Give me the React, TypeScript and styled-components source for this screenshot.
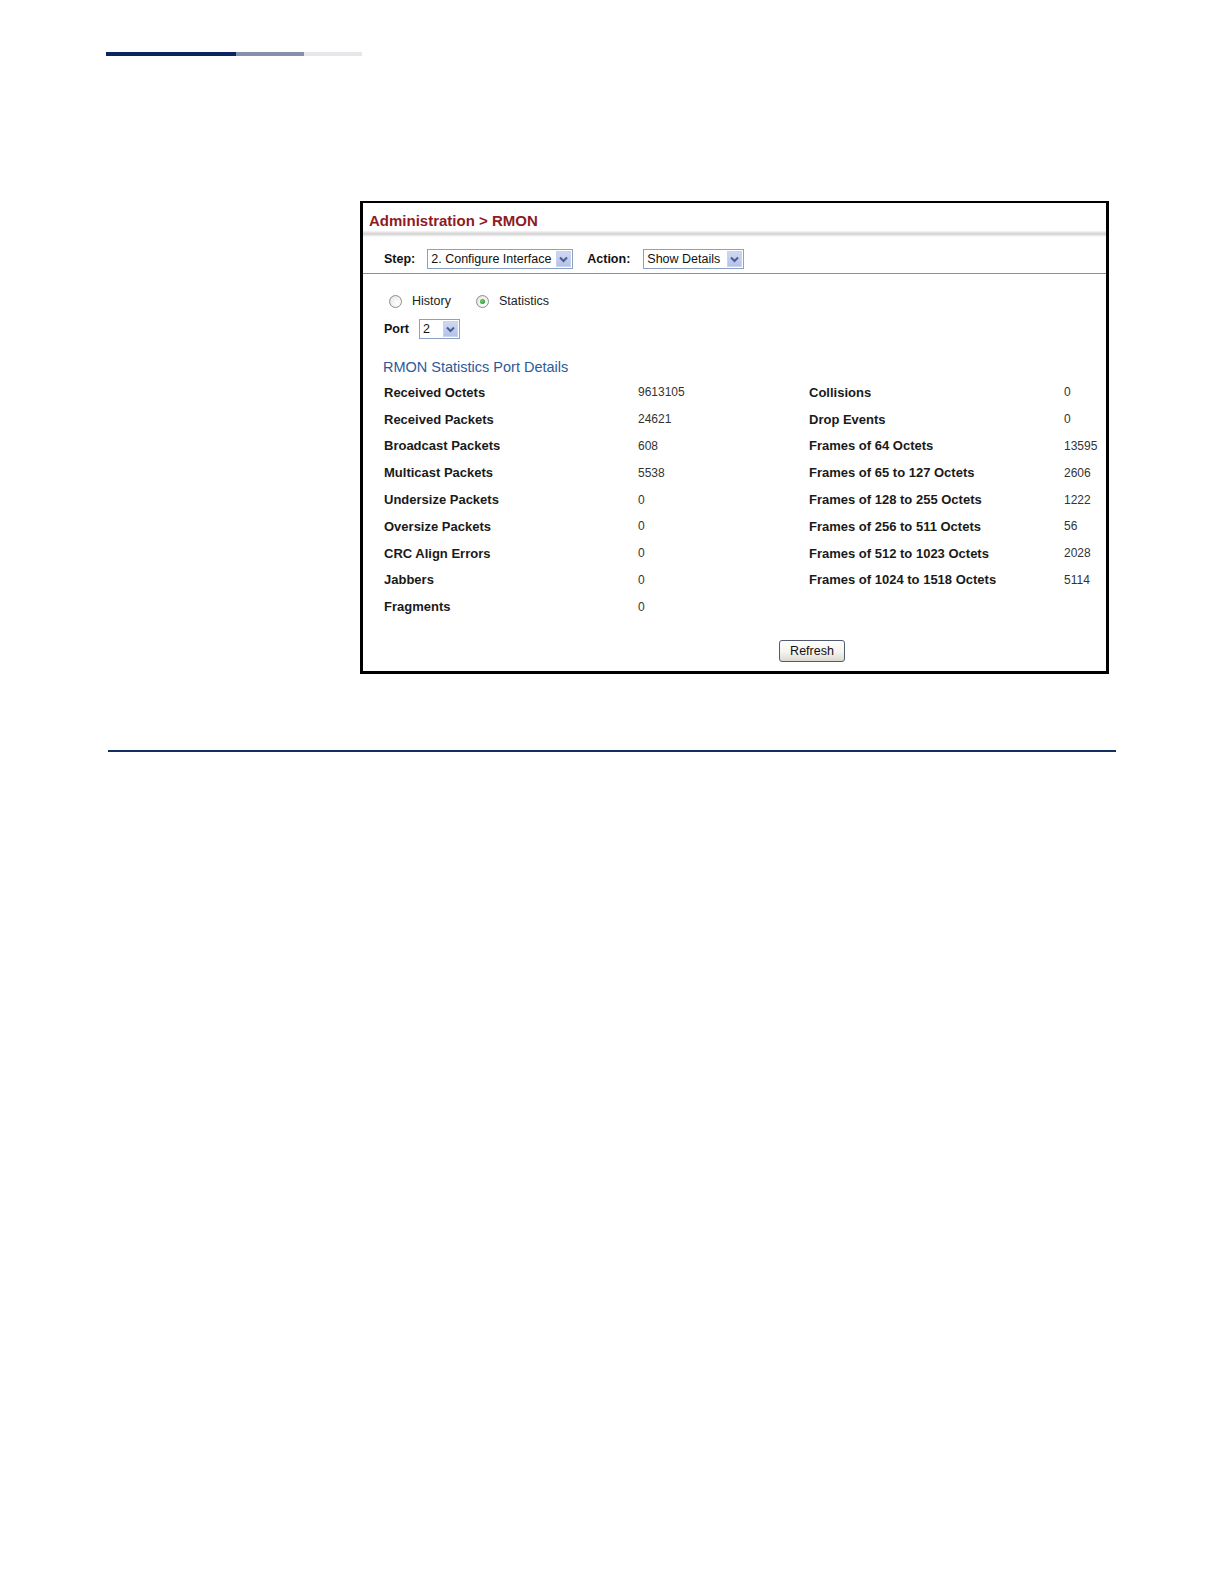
import styled, { createGlobalStyle } from "styled-components";

const GlobalStyle = createGlobalStyle`
  html, body {
    margin: 0;
    padding: 0;
    background: #ffffff;
  }
  body {
    font-family: "Liberation Sans", Arial, sans-serif;
    color: #111111;
  }
`

const Page = styled.div`
  width: 1224px;
  min-height: 1584px;
  padding-top: 52px;
  box-sizing: border-box;
`

const TopRule = styled.div`
  display: flex;
  margin-left: 106px;
  height: 4px;
`

const RuleSegment = styled.div<{ $width: number; $color: string }>`
  width: ${(p) => p.$width}px;
  height: 100%;
  background: ${(p) => p.$color};
`

const Panel = styled.div`
  margin: 145px 0 0 360px;
  width: 749px;
  box-sizing: border-box;
  border: 3px solid #000000;
  border-top-width: 2px;
  background: #ffffff;
`

const Title = styled.div`
  padding: 8px 0 0 6px;
  height: 20px;
  line-height: 20px;
  font-size: 15px;
  font-weight: 700;
  color: #8e1b1f;
`

const TitleShadow = styled.div`
  height: 6px;
  background: linear-gradient(to bottom, #f7f7f7 0%, #d2d2d2 45%, #e4e4e4 70%, #ffffff 100%);
`

const Toolbar = styled.div`
  display: flex;
  align-items: center;
  padding: 12px 0 4px 21px;
  border-bottom: 1px solid #8f8f8f;
`

const FieldLabel = styled.span<{ $gap?: number }>`
  font-size: 12.5px;
  font-weight: 700;
  color: #111111;
  margin-right: ${(p) => p.$gap ?? 12}px;
`

const SelectBox = styled.div<{ $width: number; $gap?: number }>`
  display: inline-flex;
  align-items: center;
  justify-content: space-between;
  box-sizing: border-box;
  width: ${(p) => p.$width}px;
  height: 20px;
  padding-left: 3px;
  margin-right: ${(p) => p.$gap ?? 0}px;
  border: 1px solid #8aa1c4;
  background: #ffffff;
  font-size: 12.5px;
  color: #111111;
  white-space: nowrap;
`

const SelectArrow = styled.span`
  display: inline-flex;
  align-items: center;
  justify-content: center;
  width: 15px;
  height: 16px;
  margin-right: 1px;
  box-sizing: border-box;
  border: 1px solid #c9d3ef;
  background: linear-gradient(to bottom, #cfd8f3 0%, #b5c2e8 100%);
`

const RadioRow = styled.div`
  display: flex;
  align-items: center;
  height: 16px;
  margin-top: 19px;
  padding-left: 26px;
`

const RadioOption = styled.label<{ $gap?: number }>`
  display: inline-flex;
  align-items: center;
  gap: 10px;
  margin-right: ${(p) => p.$gap ?? 0}px;
  font-size: 12.5px;
  color: #222222;
`

const RadioDot = styled.span<{ $checked: boolean }>`
  position: relative;
  width: 13px;
  height: 13px;
  box-sizing: border-box;
  border-radius: 50%;
  border: 1px solid #8e8e8e;
  background: radial-gradient(circle at 65% 65%, #ffffff 0%, #f1f1ee 50%, #d9d9d4 100%);

  &::after {
    content: "";
    display: ${(p) => (p.$checked ? "block" : "none")};
    position: absolute;
    left: 3px;
    top: 3px;
    width: 5px;
    height: 5px;
    border-radius: 50%;
    background: radial-gradient(circle at 40% 40%, #7ad27a 0%, #2f9a35 70%, #237a28 100%);
  }
`

const PortRow = styled.div`
  display: flex;
  align-items: center;
  height: 20px;
  margin-top: 10px;
  padding-left: 21px;
`

const SectionHeading = styled.div`
  margin-top: 19px;
  padding-left: 20px;
  height: 18px;
  line-height: 18px;
  font-size: 14.5px;
  color: #2c5a9a;
`

const StatsGrid = styled.div`
  display: grid;
  grid-template-columns: 254px 171px 255px 1fr;
  grid-auto-rows: 26.8px;
  align-items: center;
  margin-top: 3px;
  padding-left: 21px;
`

const StatLabel = styled.span`
  font-size: 13px;
  font-weight: 700;
  color: #1a1a1a;
  white-space: nowrap;
`

const StatValue = styled.span`
  font-size: 12px;
  color: #333333;
`

const ButtonRow = styled.div`
  margin-top: 20px;
  padding: 0 0 9px 416px;
`

const RefreshButton = styled.button`
  width: 66px;
  height: 22px;
  padding: 0;
  border: 1px solid #4f5b70;
  border-radius: 3px;
  background: linear-gradient(to bottom, #ffffff 0%, #f4f3ee 55%, #dcd9cf 100%);
  font-family: "Liberation Sans", Arial, sans-serif;
  font-size: 12.5px;
  color: #111111;
`

const BottomRule = styled.div`
  margin: 76px 0 0 108px;
  width: 1008px;
  height: 2px;
  background: #12305f;
`

function Chevron() {
  return (
    <SelectArrow>
      <svg width="9" height="7" viewBox="0 0 9 7">
        <path d="M1 1.5 L4.5 5 L8 1.5" fill="none" stroke="#4a5d8c" strokeWidth="2" />
      </svg>
    </SelectArrow>
  )
}

const stats: [string, string, string?, string?][] = [
  ["Received Octets", "9613105", "Collisions", "0"],
  ["Received Packets", "24621", "Drop Events", "0"],
  ["Broadcast Packets", "608", "Frames of 64 Octets", "13595"],
  ["Multicast Packets", "5538", "Frames of 65 to 127 Octets", "2606"],
  ["Undersize Packets", "0", "Frames of 128 to 255 Octets", "1222"],
  ["Oversize Packets", "0", "Frames of 256 to 511 Octets", "56"],
  ["CRC Align Errors", "0", "Frames of 512 to 1023 Octets", "2028"],
  ["Jabbers", "0", "Frames of 1024 to 1518 Octets", "5114"],
  ["Fragments", "0"],
]

export default function App() {
  return (
    <>
      <GlobalStyle />
      <Page>
        <TopRule>
          <RuleSegment $width={130} $color="#0b2462" />
          <RuleSegment $width={68} $color="#8591ab" />
          <RuleSegment $width={58} $color="#e6e7ea" />
        </TopRule>

        <Panel>
          <Title>Administration &gt; RMON</Title>
          <TitleShadow />

          <Toolbar>
            <FieldLabel>Step:</FieldLabel>
            <SelectBox $width={146} $gap={14}>
              2. Configure Interface
              <Chevron />
            </SelectBox>
            <FieldLabel $gap={13}>Action:</FieldLabel>
            <SelectBox $width={101}>
              Show Details
              <Chevron />
            </SelectBox>
          </Toolbar>

          <RadioRow>
            <RadioOption $gap={25}>
              <RadioDot $checked={false} />
              History
            </RadioOption>
            <RadioOption>
              <RadioDot $checked={true} />
              Statistics
            </RadioOption>
          </RadioRow>

          <PortRow>
            <FieldLabel $gap={10}>Port</FieldLabel>
            <SelectBox $width={41}>
              2
              <Chevron />
            </SelectBox>
          </PortRow>

          <SectionHeading>RMON Statistics Port Details</SectionHeading>

          <StatsGrid>
            {stats.map(([label, value, rLabel, rValue]) => [
              <StatLabel key={label + "-l"}>{label}</StatLabel>,
              <StatValue key={label + "-v"}>{value}</StatValue>,
              <StatLabel key={label + "-rl"}>{rLabel ?? ""}</StatLabel>,
              <StatValue key={label + "-rv"}>{rValue ?? ""}</StatValue>,
            ])}
          </StatsGrid>

          <ButtonRow>
            <RefreshButton>Refresh</RefreshButton>
          </ButtonRow>
        </Panel>

        <BottomRule />
      </Page>
    </>
  );
}
